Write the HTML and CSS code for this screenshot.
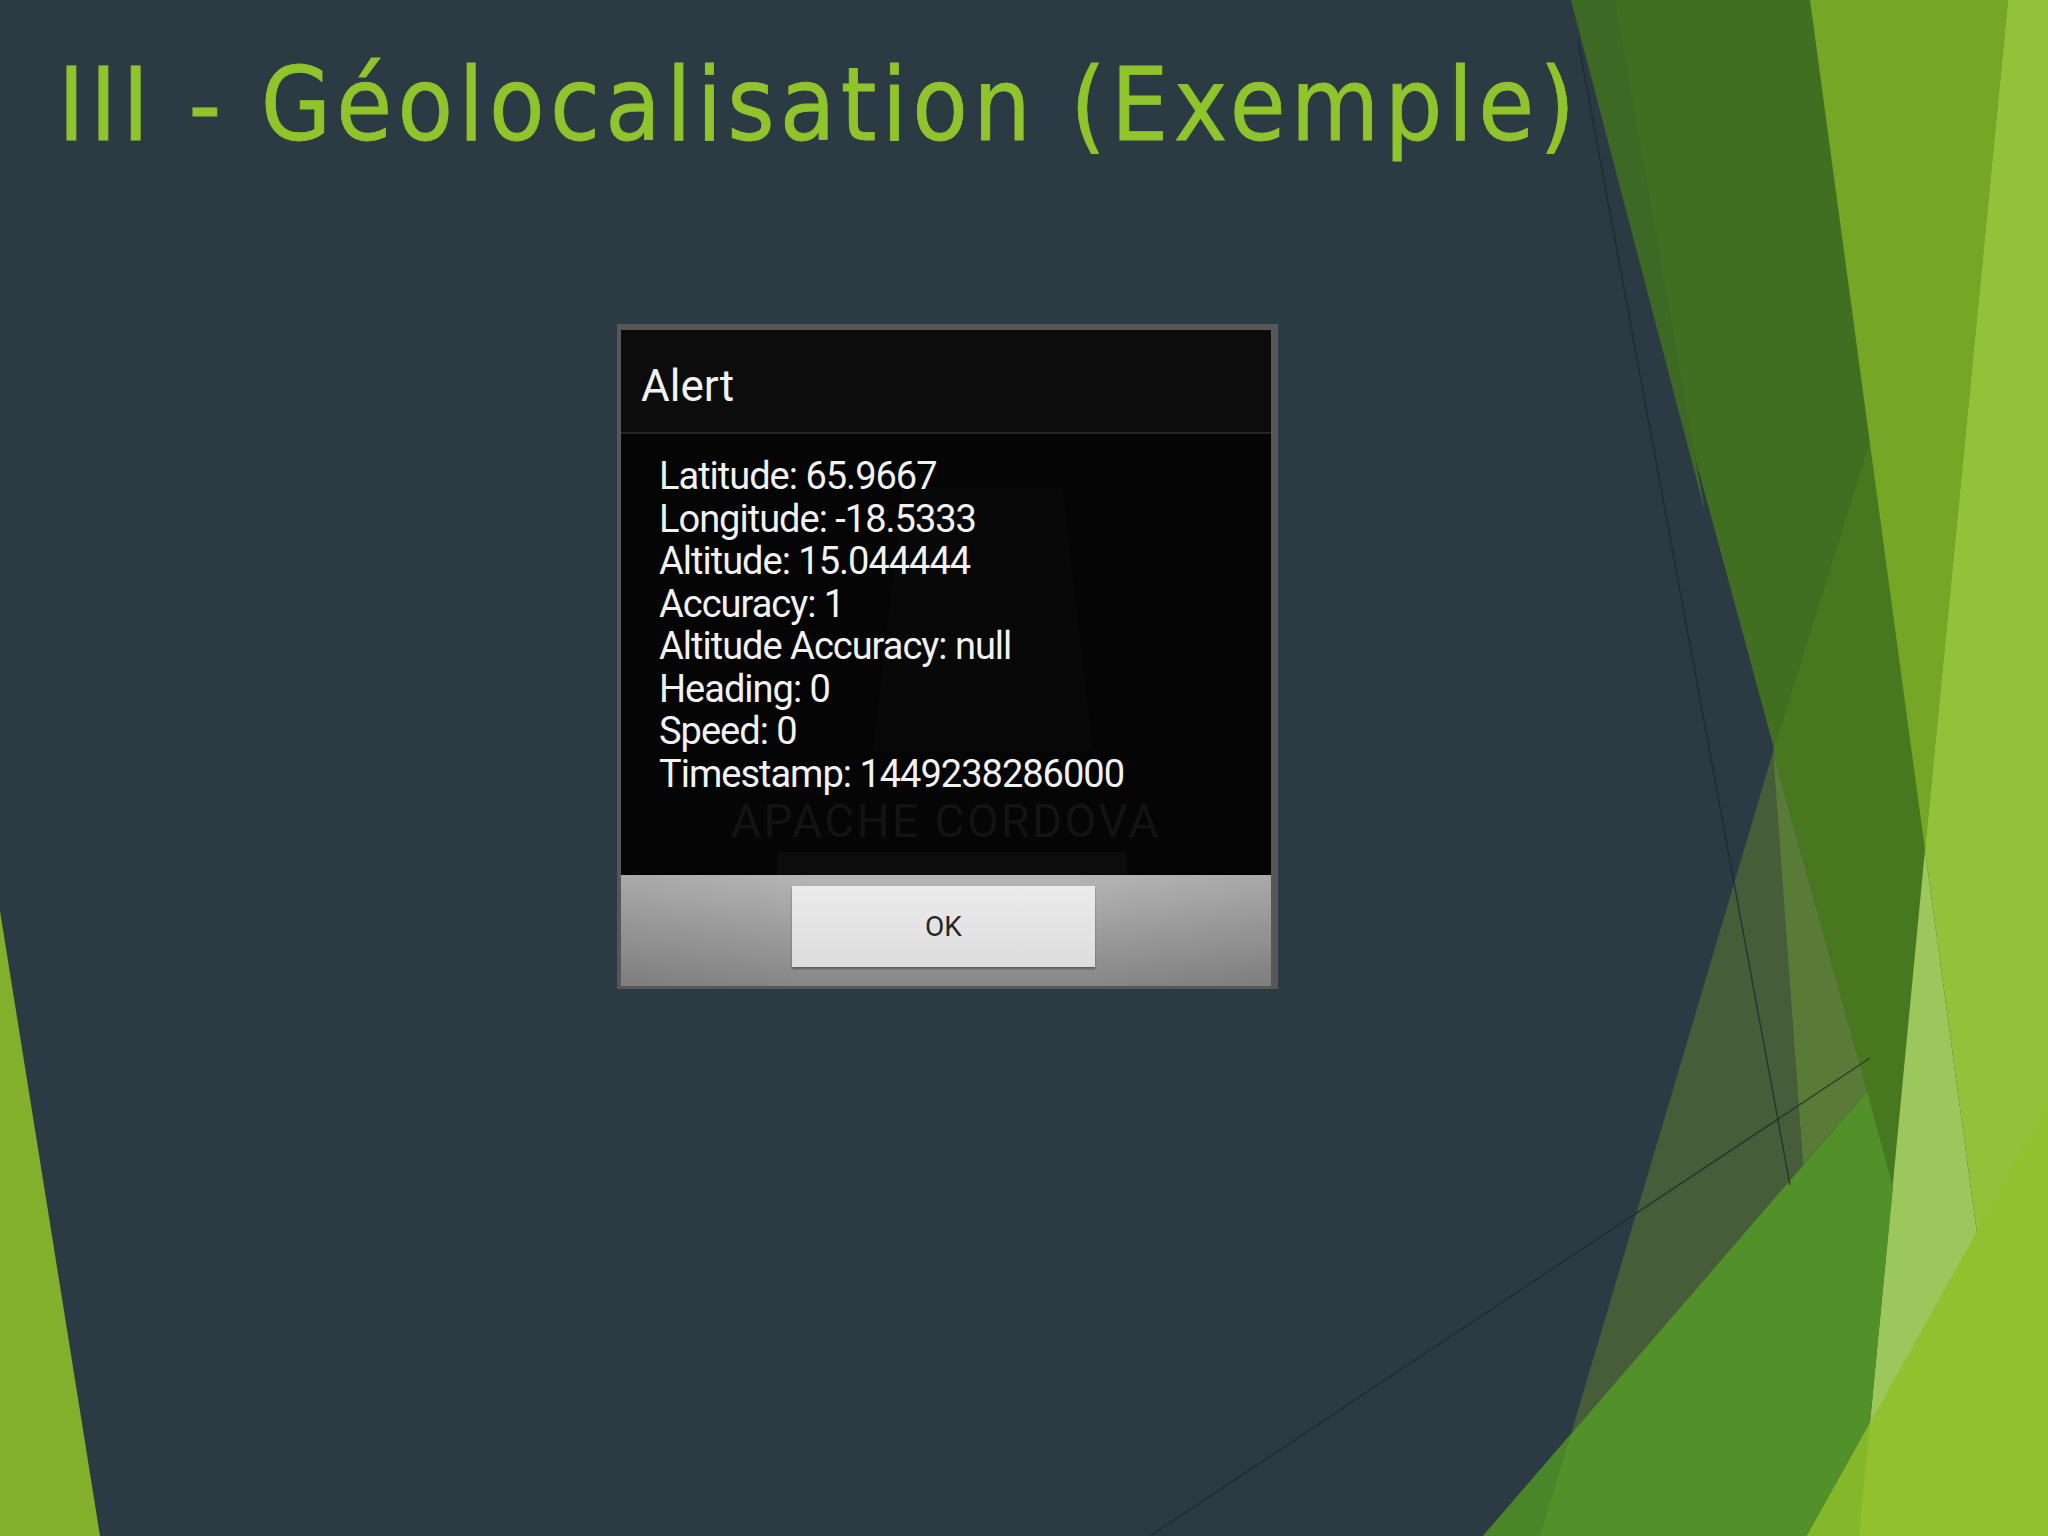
FILE: index.html
```html
<!DOCTYPE html>
<html lang="fr">
<head>
<meta charset="utf-8">
<title>III - Géolocalisation (Exemple)</title>
<link rel="stylesheet" href="styles.css">
</head>
<body>
<div class="slide">
  <svg class="deco" width="2048" height="1536" viewBox="0 0 2048 1536" aria-hidden="true">
    <polygon points="0,911 100,1536 0,1536" fill="#82b02c"/>
    <polygon points="1571,0 2008,0 1893,1187" fill="#416f22"/>
    <polygon points="1571,0 1615,0 1705,512" fill="#3c6a24"/>
    <polygon points="2008,0 1773,752 1893,1187" fill="#47781f"/>
    <polygon points="1810,0 2008,0 1925,850" fill="#75a626"/>
    <polygon points="2008,0 2048,0 2048,1536 2018,1536 1925,850" fill="#92c13a"/>
    <polygon points="1925,850 2018,1536 1859,1536" fill="#9bc75d"/>
    <polygon points="1773,752 1803,1165 1571,1434" fill="#475d3a"/>
    <polygon points="1773,752 1867,1091 1803,1165" fill="#5a7a38"/>
    <polygon points="1483,1536 1867,1091 1893,1187 1859,1536" fill="#52902a"/>
    <polygon points="1483,1536 1571,1434 1540,1536" fill="#4a852a"/>
    <polygon points="1807,1536 2048,1104 2048,1536" fill="#91c12f"/>
    <polygon points="1807,1536 1870,1423 1859,1536" fill="#85b72b"/>
    <line x1="1578" y1="40" x2="1790" y2="1185" stroke="#1c272e" stroke-width="1.5" stroke-opacity="0.7"/>
    <line x1="1150" y1="1536" x2="1870" y2="1058" stroke="#1c272e" stroke-width="1.5" stroke-opacity="0.7"/>
  </svg>

  <h1 class="title">III - Géolocalisation (Exemple)</h1>

  <div class="dialog">
    <div class="dlg-header">Alert</div>
    <div class="dlg-sep"></div>
    <div class="dlg-body">
      <div class="watermark">
        <svg class="wm-logo" width="220" height="260" viewBox="0 0 220 260" aria-hidden="true">
          <polygon points="30,0 190,0 220,260 0,260" fill="#080808"/>
        </svg>
        <div class="wm-text">APACHE CORDOVA</div>
        <div class="wm-bar"></div>
      </div>
      <div class="lines">
        <div class="line">Latitude: 65.9667</div>
        <div class="line">Longitude: -18.5333</div>
        <div class="line">Altitude: 15.044444</div>
        <div class="line">Accuracy: 1</div>
        <div class="line">Altitude Accuracy: null</div>
        <div class="line">Heading: 0</div>
        <div class="line">Speed: 0</div>
        <div class="line">Timestamp: 1449238286000</div>
      </div>
    </div>
    <div class="dlg-buttons">
      <div class="btn">OK</div>
    </div>
  </div>
</div>
</body>
</html>
```

FILE: styles.css
```css
html, body {
  margin: 0;
  padding: 0;
  background: #2c3a44;
}

.slide {
  position: relative;
  width: 2048px;
  height: 1536px;
  background: #2c3a44;
  overflow: hidden;
}

.deco {
  position: absolute;
  left: 0;
  top: 0;
}

.title {
  position: relative;
  margin: 0;
  padding: 45px 0 0 58px;
  font-family: "DejaVu Sans Condensed", "DejaVu Sans", sans-serif;
  font-stretch: condensed;
  font-weight: normal;
  font-size: 101px;
  line-height: 121px;
  letter-spacing: 5.3px;
  color: #8fc42c;
  white-space: nowrap;
  -webkit-text-stroke: 0.8px #8fc42c;
}

.dialog {
  position: relative;
  margin: 158px 0 0 617px;
  width: 650px;
  border-style: solid;
  border-color: #575757;
  border-width: 6px 7px 3px 4px;
  font-family: Roboto, "Liberation Sans", sans-serif;
  color: #f2f2f2;
}

.dlg-header {
  height: 92px;
  padding: 10px 0 0 20px;
  background: #0c0c0c;
  font-size: 44px;
  line-height: 92px;
}

.dlg-sep {
  height: 2px;
  background: #262626;
}

.dlg-body {
  position: relative;
  height: 441px;
  background: #050505;
  overflow: hidden;
}

.watermark {
  position: absolute;
  left: 0;
  top: 0;
  width: 100%;
  height: 100%;
}

.wm-logo {
  position: absolute;
  left: 252px;
  top: 56px;
}

.wm-text {
  position: absolute;
  left: 110px;
  top: 362px;
  font-size: 46px;
  line-height: 50px;
  letter-spacing: 2.5px;
  color: #131313;
  white-space: nowrap;
}

.wm-bar {
  position: absolute;
  left: 156px;
  top: 418px;
  width: 350px;
  height: 23px;
  background: #0c0c0c;
}

.lines {
  position: relative;
  padding: 21px 0 0 38px;
}

.line {
  font-size: 38px;
  line-height: 42.5px;
  letter-spacing: -1px;
  white-space: nowrap;
}

.dlg-buttons {
  height: 100px;
  padding: 11px 5px 0 0;
  display: flex;
  justify-content: center;
  background:
    linear-gradient(to right, rgba(0,0,0,0.07), rgba(0,0,0,0) 30%, rgba(0,0,0,0) 70%, rgba(0,0,0,0.07)),
    linear-gradient(#b6b6b6, #878787);
}

.btn {
  width: 303px;
  height: 81px;
  display: flex;
  align-items: center;
  justify-content: center;
  background: linear-gradient(#ebebeb, #dddddd);
  box-shadow: 0 2px 2px rgba(0, 0, 0, 0.35);
  font-size: 28px;
  color: #262626;
}
```
